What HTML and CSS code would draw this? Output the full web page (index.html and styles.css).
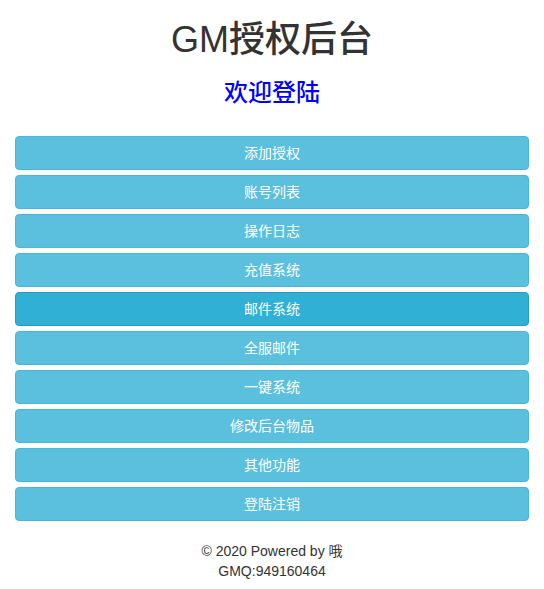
FILE: index.html
```html
<!DOCTYPE html>
<html lang="zh-CN">
<head>
<meta charset="utf-8">
<title>GM授权后台</title>
<link rel="stylesheet" href="styles.css">
</head>
<body>
<div class="container">
  <h1 class="title">GM授权后台</h1>
  <h3 class="welcome">欢迎登陆</h3>
  <div class="menu">
    <a class="btn" href="#">添加授权</a>
    <a class="btn" href="#">账号列表</a>
    <a class="btn" href="#">操作日志</a>
    <a class="btn" href="#">充值系统</a>
    <a class="btn active" href="#">邮件系统</a>
    <a class="btn" href="#">全服邮件</a>
    <a class="btn" href="#">一键系统</a>
    <a class="btn" href="#">修改后台物品</a>
    <a class="btn" href="#">其他功能</a>
    <a class="btn" href="#">登陆注销</a>
  </div>
  <div class="footer">
    <div>© 2020 Powered by 哦</div>
    <div>GMQ:949160464</div>
  </div>
</div>
</body>
</html>
```
FILE: styles.css
```css
html, body {
  margin: 0;
  padding: 0;
  background: #fff;
}
body {
  font-family: "Liberation Sans", Arial, "Noto Sans CJK SC", sans-serif;
  font-size: 14px;
  line-height: 20px;
  color: #333;
}
.container {
  padding: 0 15px;
}
.title {
  margin: 20px 0 10px;
  font-size: 36px;
  font-weight: 500;
  line-height: 1.1;
  text-align: center;
  color: #333;
}
.welcome {
  margin: 20px 0 30px;
  font-size: 24px;
  font-weight: 500;
  line-height: 1.1;
  text-align: center;
  color: #0000ff;
}
.menu {
  display: flex;
  flex-direction: column;
  gap: 5px;
}
.btn {
  display: block;
  box-sizing: border-box;
  height: 34px;
  padding: 6px 12px;
  font-size: 14px;
  line-height: 20px;
  text-align: center;
  text-decoration: none;
  color: #fff;
  background: #5bc0de;
  border: 1px solid #46b8da;
  border-radius: 4px;
}
.btn.active {
  background: #31b0d5;
  border-color: #269abc;
}
.footer {
  margin-top: 20px;
  text-align: center;
  color: #333;
}
```
